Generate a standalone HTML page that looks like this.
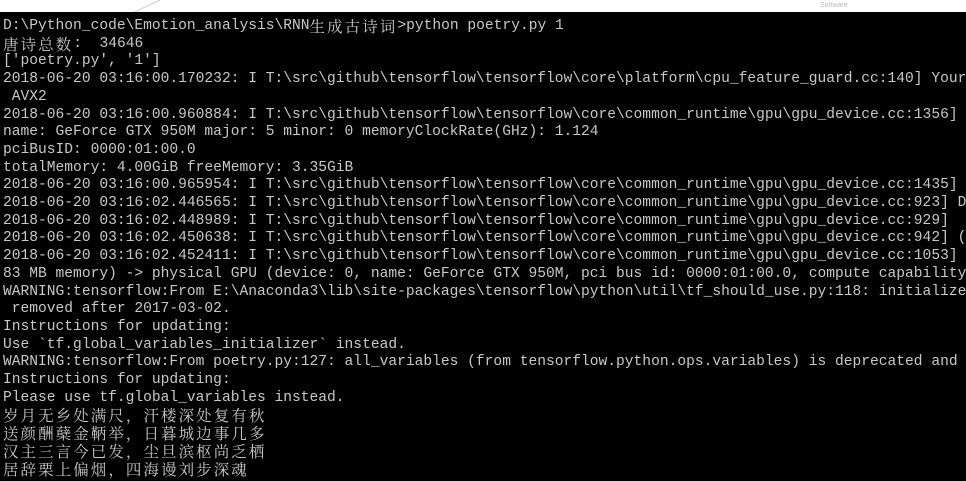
<!DOCTYPE html><html><head><meta charset="utf-8"><style>
body{margin:0;width:966px;height:481px;overflow:hidden;background:#fff;position:relative}
#c{position:absolute;top:12px;left:0;width:966px;height:469px;background:#000;overflow:hidden}
pre{margin:0;padding:6px 0 0 3px;color:#c8c8c8;font-family:"Liberation Mono",monospace;font-size:14.6px;line-height:17.7px;white-space:pre}
.z{font-family:"Noto Serif CJK SC",serif;font-size:15.5px;letter-spacing:2.06px;display:inline-block;height:17.7px;line-height:17.7px;vertical-align:top;overflow:hidden}
.t{position:absolute;left:820px;top:2px;font:7px "Liberation Sans",sans-serif;color:#bbb}
</style></head><body>
<svg style="position:absolute;left:130px;top:0" width="40" height="14"><line x1="0" y1="14" x2="30" y2="0" stroke="#ccc"/></svg>
<div class="t">Software</div>
<div id="c"><pre>D:\Python_code\Emotion_analysis\RNN<span class="z">生成古诗词</span>&gt;python poetry.py 1
<span class="z">唐诗总数</span>:  34646
['poetry.py', '1']
2018-06-20 03:16:00.170232: I T:\src\github\tensorflow\tensorflow\core\platform\cpu_feature_guard.cc:140] Your
 AVX2
2018-06-20 03:16:00.960884: I T:\src\github\tensorflow\tensorflow\core\common_runtime\gpu\gpu_device.cc:1356]
name: GeForce GTX 950M major: 5 minor: 0 memoryClockRate(GHz): 1.124
pciBusID: 0000:01:00.0
totalMemory: 4.00GiB freeMemory: 3.35GiB
2018-06-20 03:16:00.965954: I T:\src\github\tensorflow\tensorflow\core\common_runtime\gpu\gpu_device.cc:1435]
2018-06-20 03:16:02.446565: I T:\src\github\tensorflow\tensorflow\core\common_runtime\gpu\gpu_device.cc:923] D
2018-06-20 03:16:02.448989: I T:\src\github\tensorflow\tensorflow\core\common_runtime\gpu\gpu_device.cc:929]
2018-06-20 03:16:02.450638: I T:\src\github\tensorflow\tensorflow\core\common_runtime\gpu\gpu_device.cc:942] (
2018-06-20 03:16:02.452411: I T:\src\github\tensorflow\tensorflow\core\common_runtime\gpu\gpu_device.cc:1053]
83 MB memory) -&gt; physical GPU (device: 0, name: GeForce GTX 950M, pci bus id: 0000:01:00.0, compute capability
WARNING:tensorflow:From E:\Anaconda3\lib\site-packages\tensorflow\python\util\tf_should_use.py:118: initialize
 removed after 2017-03-02.
Instructions for updating:
Use `tf.global_variables_initializer` instead.
WARNING:tensorflow:From poetry.py:127: all_variables (from tensorflow.python.ops.variables) is deprecated and
Instructions for updating:
Please use tf.global_variables instead.
<span class="z">岁月无乡处满尺，汗楼深处复有秋</span>
<span class="z">送颜酬蘖金鞆举，日暮城边事几多</span>
<span class="z">汉主三言今已发，尘旦滨枢尚乏栖</span>
<span class="z">居辞栗上偏烟，四海谩刘步深魂</span></pre></div>
</body></html>
